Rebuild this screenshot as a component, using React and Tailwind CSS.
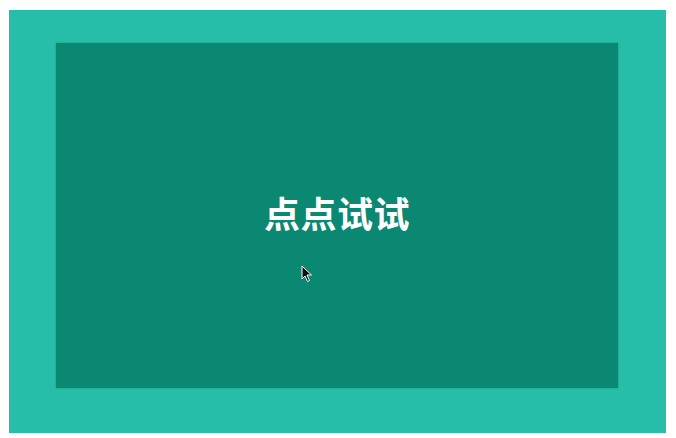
import React from "react";

export default function App() {
  return (
    <div className="w-[676px] h-[438px] bg-white pt-[10px] pl-[9px]">
      <div className="w-[657px] h-[423px] bg-[#27bea9] pt-[33px] pl-[47px]">
        <div className="relative w-[562px] h-[345px] bg-[#0b8872] shadow-[0_0_2px_rgba(0,0,0,0.25)] flex items-center justify-center">
          <span
            className="text-white font-bold text-[36px] leading-none tracking-[0.5px] -mt-[7px]"
            style={{ fontFamily: '"Noto Sans CJK SC", sans-serif' }}
          >
            点点试试
          </span>
          {/* mouse pointer */}
          <svg
            className="absolute left-[245px] top-[222px]"
            width="12"
            height="18"
            viewBox="0 0 12 18"
          >
            <path
              d="M1 1 L1 14 L4 11 L6.5 16.5 L8.5 15.5 L6 10 L10.5 10 Z"
              fill="#111"
              stroke="#fff"
              strokeWidth="1"
              strokeLinejoin="round"
            />
          </svg>
        </div>
      </div>
    </div>
  );
}
